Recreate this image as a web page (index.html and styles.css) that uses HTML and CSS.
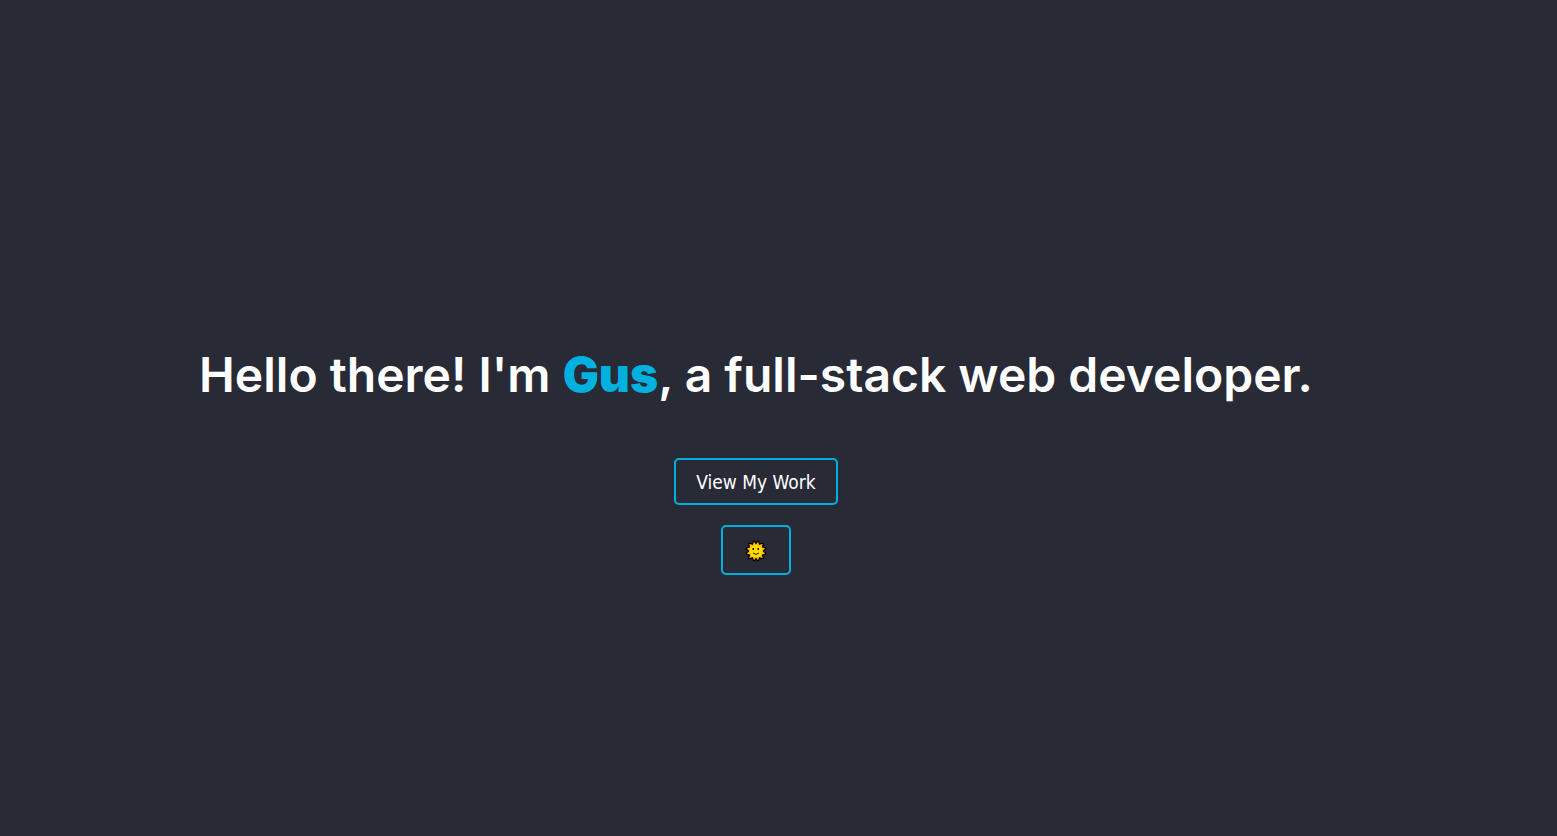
FILE: index.html
```html
<!DOCTYPE html>
<html lang="en">
<head>
<meta charset="utf-8">
<meta name="viewport" content="width=device-width, initial-scale=1">
<title>Gus</title>
<link rel="stylesheet" href="styles.css">
</head>
<body>
<main class="hero">
  <h1 class="title">Hello there! I'm <span class="name">Gus</span>, a full-stack web developer.</h1>
  <a class="button" href="#work">View My Work</a>
  <button class="button theme" type="button" aria-label="Toggle theme">
    <svg class="sun" viewBox="0 0 22 22" aria-hidden="true">
      <path d="M11 4.500 L13 1.800 L14.200 5 L17.700 3.800 L16.800 7.300 L20.200 8.500 L17.500 11 L20.200 13.500 L16.800 14.700 L17.700 18.200 L14.200 17 L13 20.200 L11 17.500 L9 20.200 L7.800 17 L4.300 18.200 L5.200 14.700 L1.800 13.500 L4.500 11 L1.800 8.500 L5.200 7.300 L4.300 3.800 L7.800 5 L9 1.800 Z" fill="#ffb900" stroke="#000" stroke-width="2.400" paint-order="stroke" stroke-linejoin="round"/>
      <circle cx="11" cy="11" r="6.300" fill="#ffdc00"/>
      <path d="M7.500 8h1.500v2H7.500zM12.500 8H14v2h-1.500z" fill="#201a00"/>
      <path d="M8 13Q11 15.800 14 13" fill="none" stroke="#201a00" stroke-width="1"/>
    </svg>
  </button>
</main>
</body>
</html>
```
FILE: styles.css
```css
* {
  box-sizing: border-box;
}

body {
  margin: 0;
  background: #282a36;
  color: #fff;
  font-family: "DejaVu Sans Condensed", "Noto Sans", sans-serif;
}

.hero {
  display: flex;
  flex-direction: column;
  align-items: center;
  justify-content: center;
  gap: 20px;
  min-height: 100vh;
  padding: 81px 45px 0 0;
}

.title {
  margin: 0 0 31px;
  font: 600 48px/64px Inter, sans-serif;
  text-align: center;
}

.name {
  color: #00b0df;
  font-weight: 900;
}

.button {
  padding: 9px 20px 7px;
  border: 2px solid #00b0df;
  border-radius: 5px;
  background: transparent;
  color: #fff;
  font-size: 19px;
  line-height: 27px;
  text-decoration: none;
  cursor: pointer;
}

.theme {
  padding: 13px 22px 11px;
}

.sun {
  display: block;
  width: 22px;
  height: 22px;
}
```
